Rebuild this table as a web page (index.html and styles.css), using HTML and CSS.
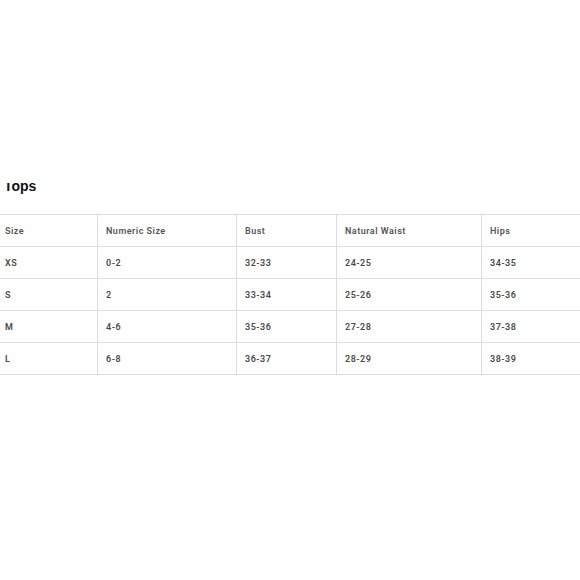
FILE: index.html
```html
<!DOCTYPE html>
<html>
<head>
<meta charset="utf-8">
<link rel="stylesheet" href="styles.css">
</head>
<body>
<div class="page">
  <div class="title-clip"><h2 class="title">Tops</h2></div>
  <table class="chart">
    <colgroup>
      <col class="c1"><col class="c2"><col class="c3"><col class="c4"><col class="c5">
    </colgroup>
    <thead>
      <tr><th>Size</th><th>Numeric Size</th><th>Bust</th><th>Natural Waist</th><th>Hips</th></tr>
    </thead>
    <tbody>
      <tr><td>XS</td><td>0-2</td><td>32-33</td><td>24-25</td><td>34-35</td></tr>
      <tr><td>S</td><td>2</td><td>33-34</td><td>25-26</td><td>35-36</td></tr>
      <tr><td>M</td><td>4-6</td><td>35-36</td><td>27-28</td><td>37-38</td></tr>
      <tr><td>L</td><td>6-8</td><td>36-37</td><td>28-29</td><td>38-39</td></tr>
    </tbody>
  </table>
</div>
</body>
</html>
```
FILE: styles.css
```css
html, body {
  margin: 0;
  padding: 0;
  background: #fff;
  overflow: hidden;
}
.page {
  width: 580px;
  height: 580px;
  overflow: hidden;
  padding-top: 183px;
  box-sizing: border-box;
}
.title-clip {
  height: 13px;
  overflow: hidden;
  padding-left: 4px;
}
.title {
  margin: -5px 0 0 0;
  font-family: "Liberation Sans", Arial, sans-serif;
  font-weight: bold;
  font-size: 14px;
  line-height: 16px;
  color: #111;
}
.chart {
  margin-top: 18px;
  margin-left: -4px;
  border-collapse: collapse;
  table-layout: fixed;
  width: 640px;
  font-family: Roboto, "Liberation Sans", sans-serif;
  font-size: 9px;
  font-weight: 600;
  letter-spacing: 0.5px;
  color: #4a4a4a;
}
.c1 { width: 101px; }
.c2 { width: 139px; }
.c3 { width: 100px; }
.c4 { width: 145px; }
.c5 { width: 155px; }
.chart th, .chart td {
  border: 1px solid #dcdcdc;
  height: 32px;
  padding: 0 0 0 8px;
  text-align: left;
  vertical-align: middle;
  box-sizing: border-box;
}
.chart th {
  font-weight: 600;
  color: #555;
}
```
